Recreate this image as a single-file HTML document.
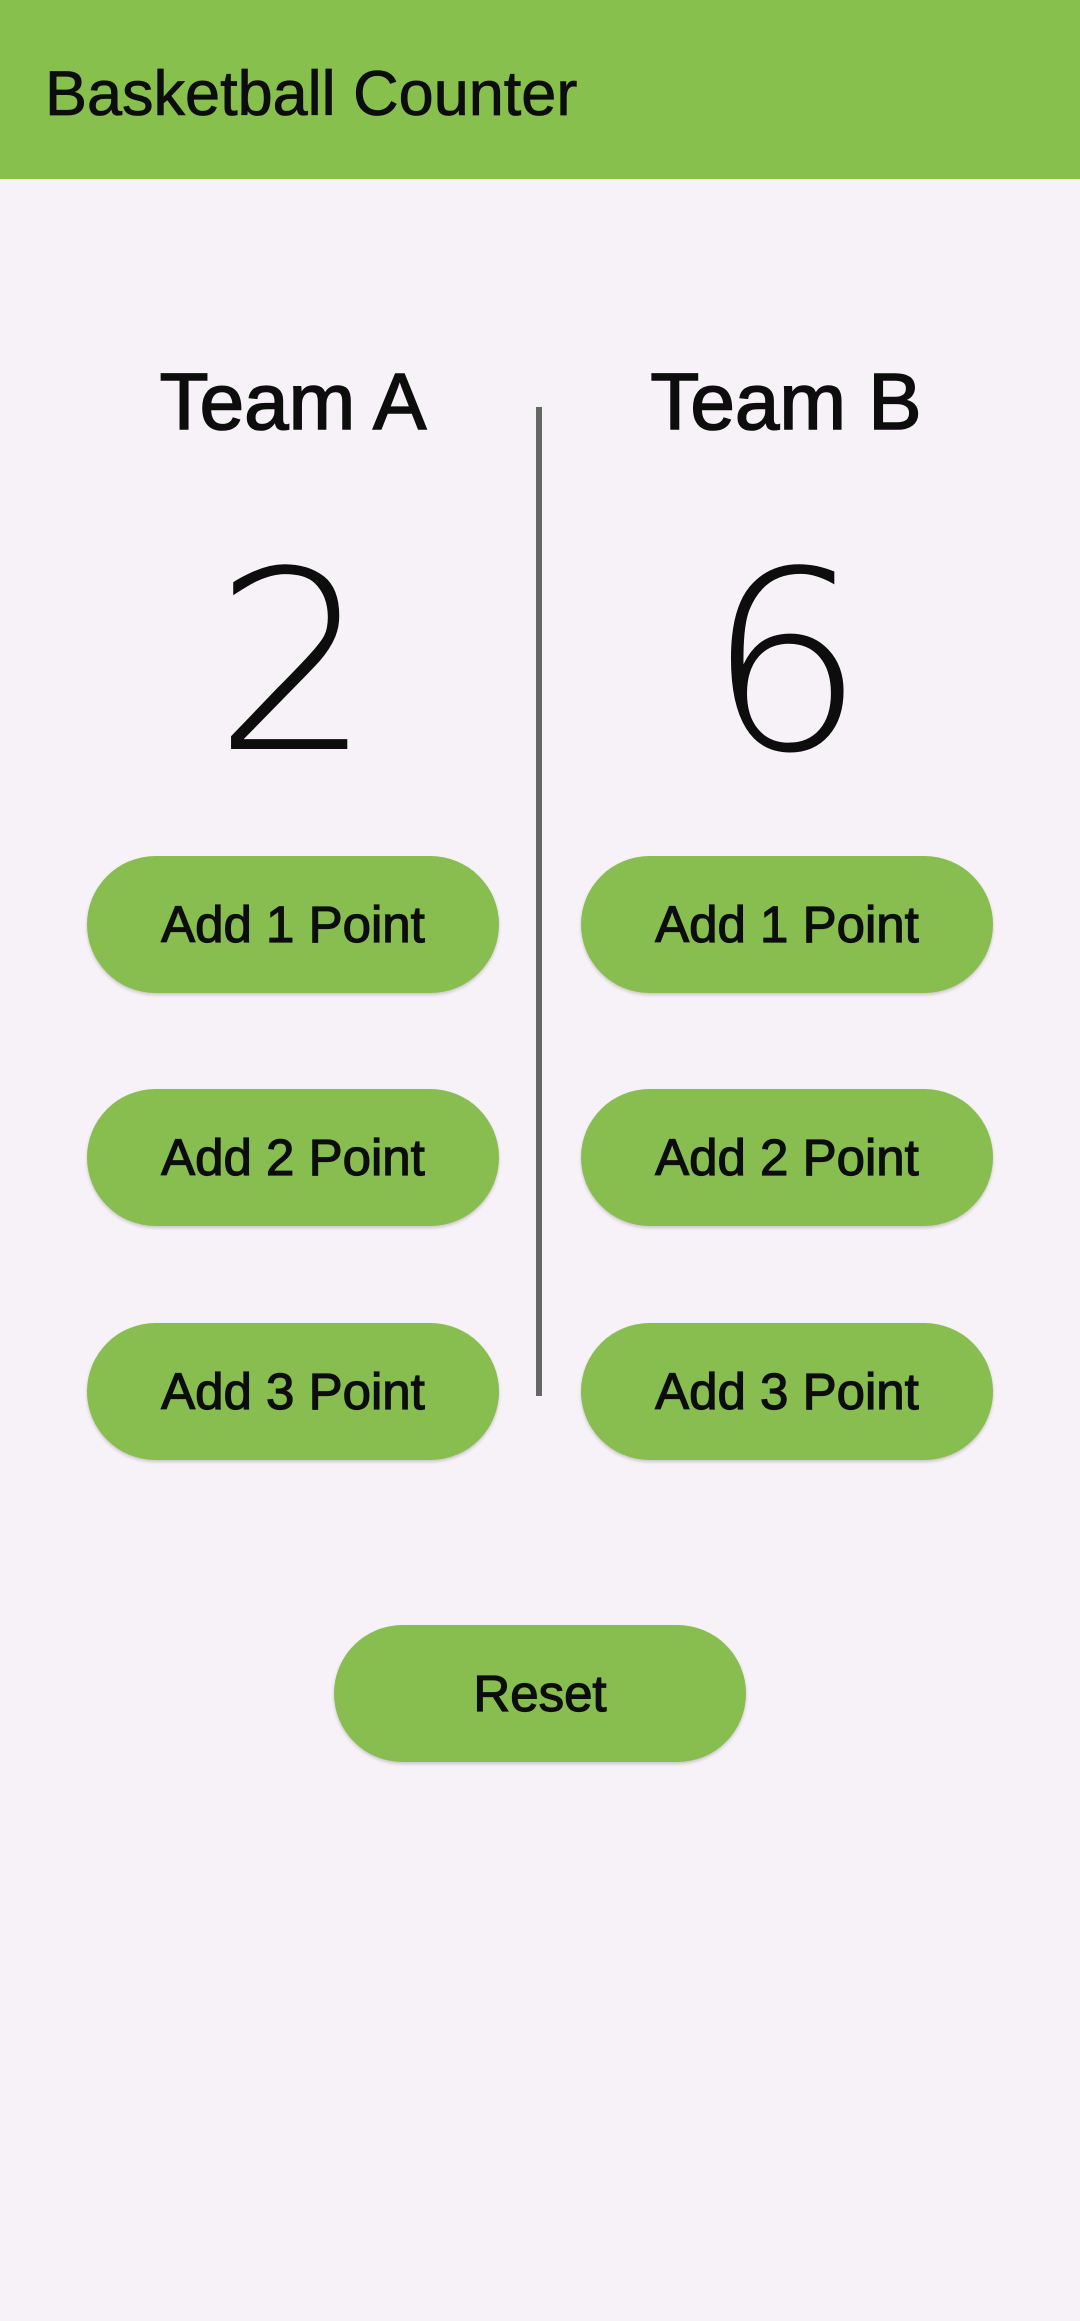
<!DOCTYPE html>
<html><head><meta charset="utf-8"><style>
html,body{margin:0;padding:0}
body{width:1080px;height:2321px;background:#f7f2f7;position:relative;overflow:hidden;font-family:"Liberation Sans",sans-serif;color:#0d0d0d}
.hdr{position:absolute;left:0;top:0;width:1080px;height:179px;background:#88c04e}
.title{position:absolute;left:45px;top:56px;font-size:63px;line-height:76px;white-space:nowrap;-webkit-text-stroke:0.8px #0d0d0d}
.team{position:absolute;width:400px;text-align:center;font-size:80px;line-height:90px;top:357px;-webkit-text-stroke:1.6px #0d0d0d}
.score{position:absolute;width:400px;text-align:center;font-family:"DejaVu Sans",sans-serif;font-weight:200;font-size:249px;line-height:300px;top:513px}
.div{position:absolute;left:536px;top:407px;width:6px;height:989px;background:#666}
.btn{position:absolute;width:412px;height:137px;border-radius:69px;background:#88bd4f;box-shadow:0 2px 3px rgba(0,0,0,0.18);text-align:center;line-height:137px;font-size:51px;-webkit-text-stroke:1.2px #0d0d0d;white-space:nowrap}
</style></head><body>
<div class="hdr"><div class="title">Basketball Counter</div></div>
<div class="team" style="left:93px">Team A</div>
<div class="team" style="left:586px">Team B</div>
<div class="score" style="left:93px">2</div>
<div class="score" style="left:586px">6</div>
<div class="div"></div>
<div class="btn" style="left:87px;top:856px">Add 1 Point</div>
<div class="btn" style="left:581px;top:856px">Add 1 Point</div>
<div class="btn" style="left:87px;top:1089px">Add 2 Point</div>
<div class="btn" style="left:581px;top:1089px">Add 2 Point</div>
<div class="btn" style="left:87px;top:1323px">Add 3 Point</div>
<div class="btn" style="left:581px;top:1323px">Add 3 Point</div>
<div class="btn" style="left:334px;top:1625px">Reset</div>
</body></html>
